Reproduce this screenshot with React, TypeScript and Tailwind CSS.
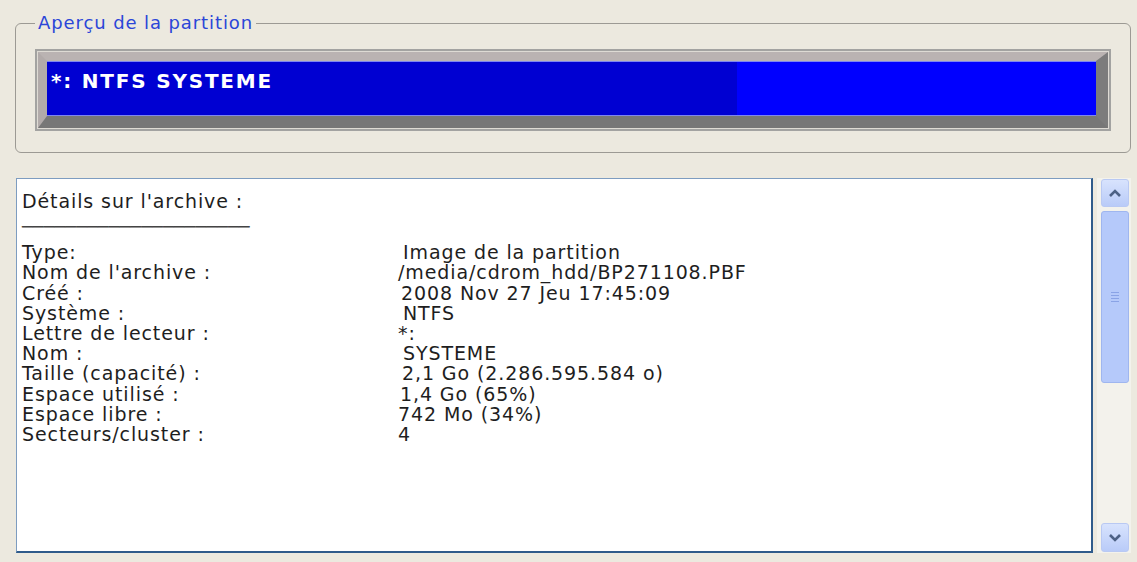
import React from "react";

const rows = [
  { label: "Type:", value: "Image de la partition", pad: "pl-[5px]" },
  { label: "Nom de l'archive :", value: "/media/cdrom_hdd/BP271108.PBF", pad: "pl-0" },
  { label: "Créé :", value: "2008 Nov 27 Jeu 17:45:09", pad: "pl-[3px]" },
  { label: "Système :", value: "NTFS", pad: "pl-[5px]" },
  { label: "Lettre de lecteur :", value: "*:", pad: "pl-0" },
  { label: "Nom :", value: "SYSTEME", pad: "pl-[5px]" },
  { label: "Taille (capacité) :", value: "2,1 Go (2.286.595.584 o)", pad: "pl-[4px]" },
  { label: "Espace utilisé :", value: "1,4 Go (65%)", pad: "pl-[2px]" },
  { label: "Espace libre :", value: "742 Mo (34%)", pad: "pl-0" },
  { label: "Secteurs/cluster :", value: "4", pad: "pl-0" },
];

function ChevronUp() {
  return (
    <svg width="14" height="10" viewBox="0 0 14 10">
      <path d="M2 8 L7 3 L12 8" fill="none" stroke="#4d6185" strokeWidth="2.6" />
    </svg>
  );
}

function ChevronDown() {
  return (
    <svg width="14" height="10" viewBox="0 0 14 10">
      <path d="M2 2 L7 7 L12 2" fill="none" stroke="#4d6185" strokeWidth="2.6" />
    </svg>
  );
}

function ScrollBar() {
  return (
    <div className="ml-[4px] w-[34px] h-[375px] bg-[#f3f2ec] flex flex-col pl-[4px] pr-[2px]">
      {/* bouton haut */}
      <div className="h-[28px] mt-[1px] rounded-[3px] border border-[#b9c9f3] bg-gradient-to-b from-[#d8e3fd] to-[#b9cbf8] flex items-center justify-center">
        <ChevronUp />
      </div>
      {/* curseur */}
      <div className="mt-[4px] h-[172px] rounded-[3px] border border-[#9fb6ef] bg-[#b5c9fa] flex flex-col items-center justify-center gap-[2px]">
        <div className="w-[8px] h-[1px] bg-[#8aa3e6]" />
        <div className="w-[8px] h-[1px] bg-[#8aa3e6]" />
        <div className="w-[8px] h-[1px] bg-[#8aa3e6]" />
        <div className="w-[8px] h-[1px] bg-[#8aa3e6]" />
      </div>
      <div className="flex-1" />
      {/* bouton bas */}
      <div className="h-[29px] mb-[1px] rounded-[3px] border border-[#b9c9f3] bg-gradient-to-b from-[#d8e3fd] to-[#b9cbf8] flex items-center justify-center">
        <ChevronDown />
      </div>
    </div>
  );
}

export default function App() {
  return (
    <div
      className="w-[1137px] h-[562px] bg-[#ece9df] overflow-hidden pl-[15px] pr-[6px] pt-[13px] text-[#1e1e1e]"
      style={{ fontFamily: '"DejaVu Sans", "Liberation Sans", sans-serif' }}
    >
      {/* Aperçu de la partition */}
      <fieldset className="border border-[#9c9a94] rounded-[6px] pl-[19px] pr-[19px] pt-[16px] pb-[21px] h-[140px]">
        <legend className="px-[3px] text-[18px] leading-[20px] tracking-[0.9px] text-[#2b46d8]">
          Aperçu de la partition
        </legend>
        <div className="border-[2px] border-[#a3a3a1] bg-[#dedbd4] p-[1px] h-[82px]">
          <div className="h-full border-t-[9px] border-l-[9px] border-b-[12px] border-r-[12px] border-t-[#bab3b2] border-l-[#b2abaa] border-b-[#777777] border-r-[#7c7c7c]">
            <div className="h-full flex border-t border-b border-[#7f86f0]">
              <div className="w-[690px] bg-[#0000d2] pl-[4px] pt-[8px]">
                <span className="text-white font-bold text-[20px] leading-[22px] tracking-[1.8px]">
                  *: NTFS SYSTEME
                </span>
              </div>
              <div className="flex-1 bg-[#0000ff]" />
            </div>
          </div>
        </div>
      </fieldset>

      {/* Détails sur l'archive */}
      <div className="mt-[25px] flex">
        <div className="ml-[1px] w-[1077px] h-[375px] bg-white border-t border-l border-t-[#7d9cc0] border-l-[#7d9cc0] border-b-[2px] border-r-[2px] border-b-[#2f5b8b] border-r-[#2f5b8b] pl-[5px] pt-[12px] text-[19px] leading-[20.2px] tracking-[0.9px]">
          <div>Détails sur l'archive :</div>
          <div className="mt-[6px] h-[20px] whitespace-nowrap text-[18px] leading-[20px] tracking-normal text-[#444]">
            ─────────────────────
          </div>
          <div className="mt-[5px]">
            {rows.map((r) => (
              <div key={r.label} className="flex whitespace-nowrap">
                <div className="w-[376px]">{r.label}</div>
                <div className={r.pad}>{r.value}</div>
              </div>
            ))}
          </div>
        </div>
        <ScrollBar />
      </div>
    </div>
  );
}
